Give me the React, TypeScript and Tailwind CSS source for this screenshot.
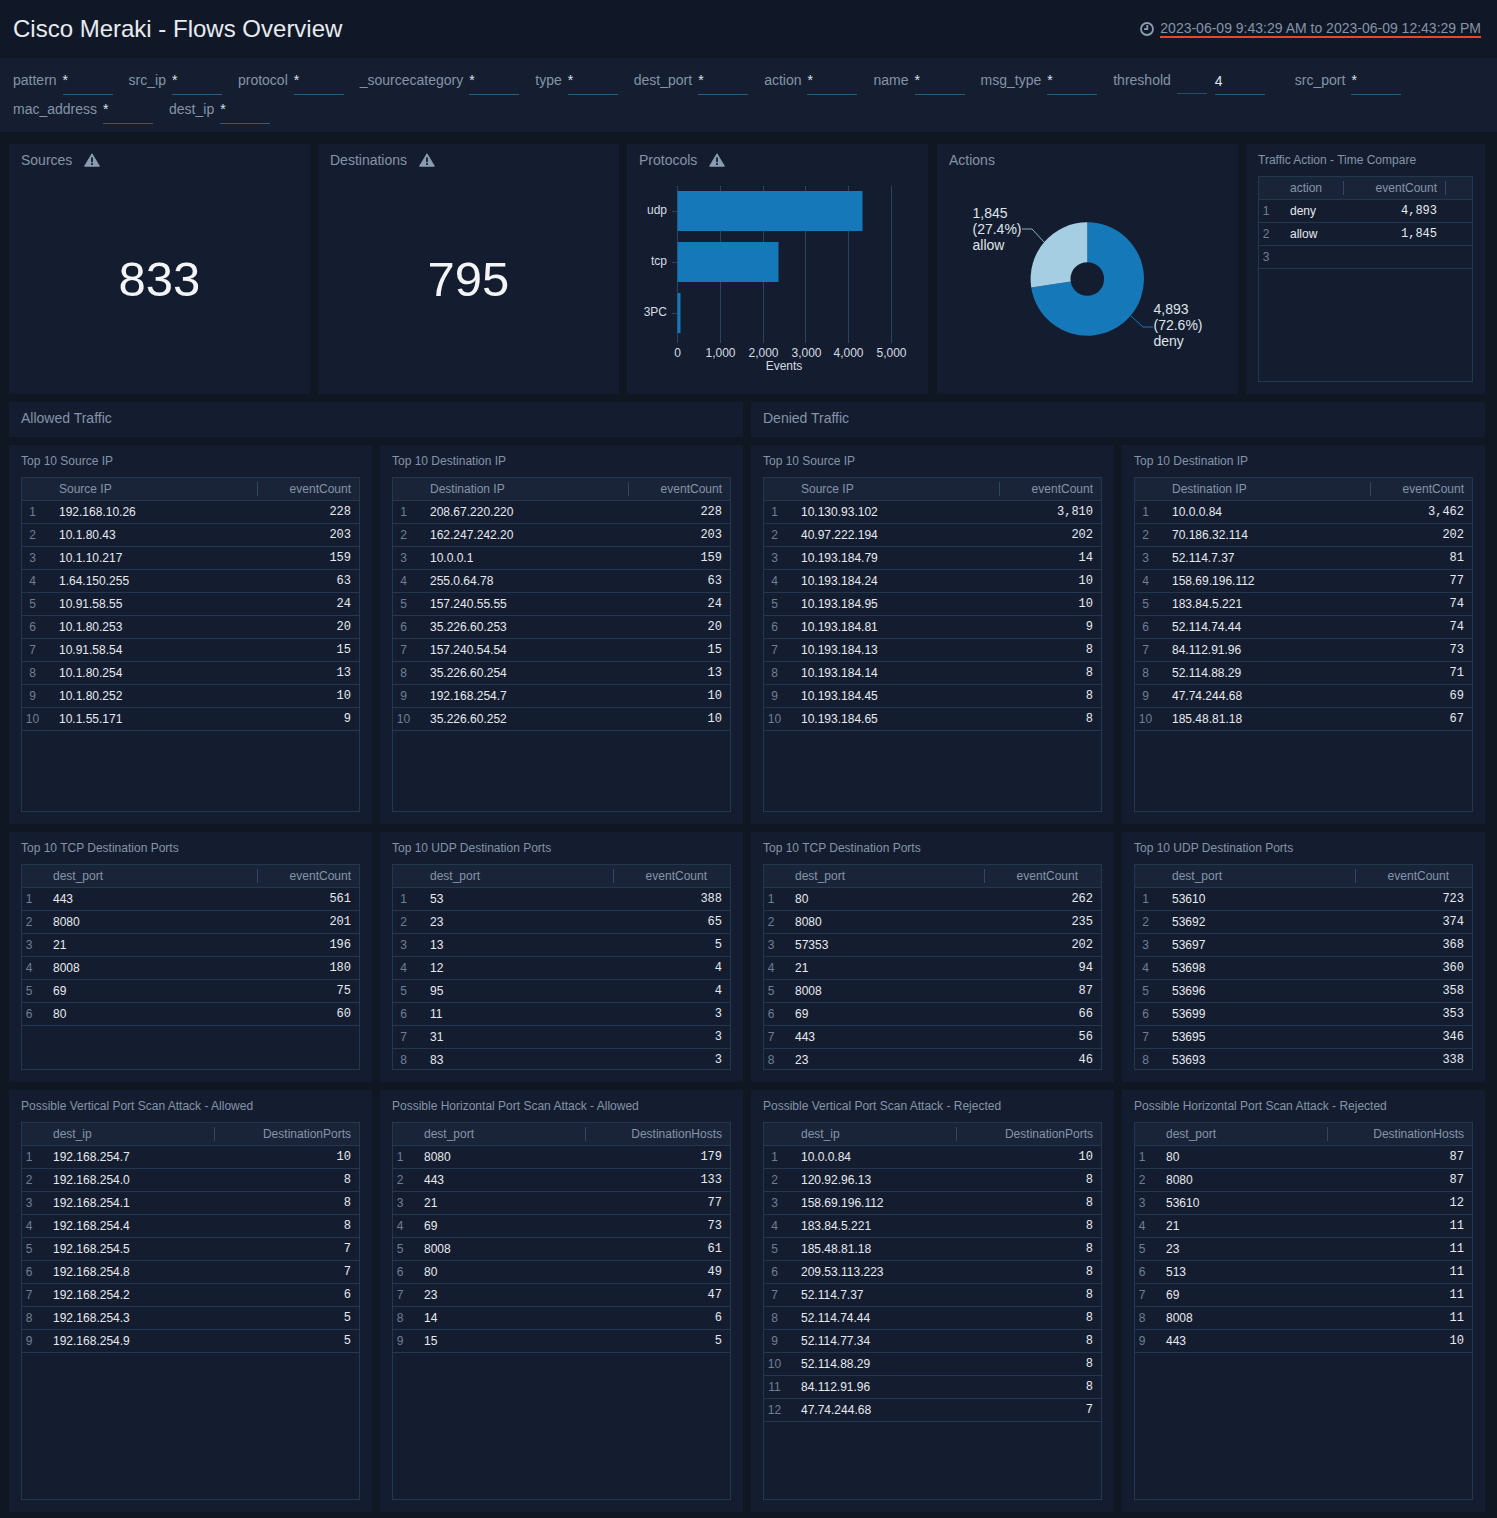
const sans = "font-['Liberation_Sans',Arial,sans-serif]";

type Row = [string, string];
type TProps = {
  title: string;
  head: string;
  right?: string;
  rows: Row[];
  wide?: boolean;
  col?: 'a' | 'b' | 'c';
};

function parse(s: string): Row[] {
  return s.split('|').map((r) => {
    const [a, b] = r.split(' ');
    return [a, b] as Row;
  });
}

function DataTable({ title, head, right = 'eventCount', rows, wide = true, col = 'a' }: TProps) {
  const idx = wide ? 'w-[37px] pr-[16px]' : 'w-[31px] pr-[17px]';
  const rc = col === 'a' ? 'w-[102px] pr-2' : col === 'b' ? 'w-[117px] pr-[23px]' : 'w-[145px] pr-2';
  return (
    <section className="bg-[#141d30] px-3 pb-3 flex flex-col min-h-0 min-w-0">
      <h3 className="h-8 shrink-0 text-xs leading-8 font-normal text-[#8494a8]">{title}</h3>
      <div className="flex-1 min-h-0 overflow-hidden border border-[#25364f] text-xs">
        <div className="flex h-[23px] items-center border-b border-[#25364f] bg-[#1a2439] text-[#8494a8]">
          <span className={`${wide ? 'w-[37px]' : 'w-[31px]'} shrink-0`} />
          <span className="flex-1">{head}</span>
          <span className={`${rc} h-[14px] leading-[14px] border-l border-[#33465f] text-right`}>{right}</span>
        </div>
        {rows.map(([a, b], i) => (
          <div key={i} className="flex h-[23px] items-center border-b border-[#25364f]">
            <span className={`${idx} shrink-0 text-center text-[#6f7f93]`}>{i + 1}</span>
            <span className="flex-1 text-[#e6eaef]">{a}</span>
            <span className="pr-2 text-right font-['Liberation_Mono',monospace] text-[#e6eaef]">{b}</span>
          </div>
        ))}
      </div>
    </section>
  );
}

function Warn() {
  return (
    <svg width="16" height="14" viewBox="0 0 16 14" className="shrink-0">
      <path d="M8 .8 15.4 13.2H.6Z" fill="#8a9cb2" stroke="#8a9cb2" strokeWidth="1" strokeLinejoin="round" />
      <rect x="7.1" y="4.4" width="1.8" height="4.8" fill="#141d30" />
      <rect x="7.1" y="10.2" width="1.8" height="1.8" fill="#141d30" />
    </svg>
  );
}

function Filter({ name, value = '*', extra }: { name: string; value?: string; extra?: boolean }) {
  return (
    <div className={`flex h-[29px] ${extra ? 'mr-[30px]' : 'mr-4'}`}>
      <span className="pt-[5px] leading-[18px] text-[#8494a8]">{name}</span>
      {extra && <span className="ml-[6px] w-[30px] h-[28px] border-b border-[#2c4a6a]" />}
      <span className={`${extra ? 'ml-2 pt-[6px]' : 'ml-[6px] pt-[5px]'} w-[50px] h-[29px] border-b border-[#2c5a85] leading-[18px] text-[#dfe4ea]`}>{value}</span>
    </div>
  );
}

function BigNumber({ title, value }: { title: string; value: string }) {
  return (
    <section className="bg-[#141d30] flex flex-col">
      <div className="flex items-center gap-3 h-[32px] px-3 text-sm text-[#8494a8]">
        <span>{title}</span>
        <Warn />
      </div>
      <div className="flex-1 flex items-center justify-center pb-[13px] text-[49px] text-[#f3f5f7]">{value}</div>
    </section>
  );
}

function BarChart() {
  const grid = [93, 136, 178, 221, 264];
  const labels = ['0', '1,000', '2,000', '3,000', '4,000', '5,000'];
  const xs = [50, 93, 136, 179, 221, 264];
  return (
    <svg width="301" height="220" viewBox="0 0 301 220" className="block text-xs" fontFamily="Liberation Sans, Arial, sans-serif">
      {grid.map((x) => (
        <line key={x} x1={x + 0.5} x2={x + 0.5} y1="12" y2="169" stroke="#2d4263" />
      ))}
      <line x1="50.5" x2="50.5" y1="12" y2="169" stroke="#2d4263" />
      <rect x="50.5" y="17" width="185" height="40" fill="#1578b8" />
      <rect x="50.5" y="68" width="101" height="40" fill="#1578b8" />
      <rect x="50.5" y="119" width="3" height="40" fill="#1578b8" />
      {[37, 88, 139].map((y) => (
        <line key={y} x1="45" x2="50" y1={y + 0.5} y2={y + 0.5} stroke="#2d4263" />
      ))}
      <g fill="#d5dbe3" textAnchor="end" fontSize="12">
        <text x="40" y="40">udp</text>
        <text x="40" y="91">tcp</text>
        <text x="40" y="142">3PC</text>
      </g>
      <g fill="#d5dbe3" textAnchor="middle" fontSize="12">
        {labels.map((l, i) => (
          <text key={l} x={xs[i] + 0.5} y="183">{l}</text>
        ))}
        <text x="157" y="196">Events</text>
      </g>
    </svg>
  );
}

function PieChart() {
  const cx = 150.3;
  const cy = 105;
  const R = 56.7;
  const a = (2 * Math.PI * 1845) / 6738;
  const px = cx - R * Math.sin(a);
  const py = cy - R * Math.cos(a);
  const hole = 16.8;
  return (
    <svg width="301" height="220" viewBox="0 0 301 220" className="block" fontFamily="Liberation Sans, Arial, sans-serif">
      <path d={`M${cx} ${cy}L${cx} ${cy - R}A${R} ${R} 0 1 1 ${px} ${py}Z`} fill="#1578b8" />
      <path d={`M${cx} ${cy}L${cx} ${cy - R}A${R} ${R} 0 0 0 ${px} ${py}Z`} fill="#a6cee3" />
      <circle cx={cx} cy={cy} r={hole} fill="#141d30" />
      <path d="M85 55H95L107 68" fill="none" stroke="#a6cee3" strokeWidth="1" opacity="0.8" />
      <path d="M194 142L206 153H216" fill="none" stroke="#1578b8" strokeWidth="1" />
      <g fill="#dfe4ea" fontSize="14">
        <text x="35.5" y="44">1,845</text>
        <text x="35.5" y="60">(27.4%)</text>
        <text x="35.5" y="76">allow</text>
        <text x="216.5" y="140">4,893</text>
        <text x="216.5" y="156">(72.6%)</text>
        <text x="216.5" y="172">deny</text>
      </g>
    </svg>
  );
}

function ChartPanel({ title, warn, children, offset }: { title: string; warn?: boolean; children: React.ReactNode; offset?: boolean }) {
  return (
    <section className={`bg-[#141d30] overflow-hidden ${offset ? 'ml-px' : ''}`}>
      <div className="flex items-center gap-3 h-[30px] px-3 pt-[2px] text-sm text-[#8494a8]">
        <span>{title}</span>
        {warn && <Warn />}
      </div>
      {children}
    </section>
  );
}

function CompareTable() {
  const rows = [
    ['deny', '4,893'],
    ['allow', '1,845'],
    ['', ''],
  ];
  return (
    <section className="bg-[#141d30] px-3 pb-3 flex flex-col min-w-0">
      <h3 className="h-8 shrink-0 text-xs leading-8 font-normal text-[#8494a8]">Traffic Action - Time Compare</h3>
      <div className="flex-1 overflow-hidden border border-[#25364f] text-xs">
        <div className="flex h-[23px] items-center border-b border-[#25364f] bg-[#1a2439] text-[#8494a8]">
          <span className="w-[31px] shrink-0" />
          <span className="w-[53px] h-[14px] leading-[14px]">action</span>
          <span className="w-[103px] h-[14px] leading-[14px] border-l border-r border-[#33465f] pr-2 text-right">eventCount</span>
        </div>
        {rows.map(([a, b], i) => (
          <div key={i} className="flex h-[23px] items-center border-b border-[#25364f]">
            <span className="w-[31px] pr-[17px] shrink-0 text-center text-[#6f7f93]">{i + 1}</span>
            <span className="w-[53px] text-[#e6eaef]">{a}</span>
            <span className="w-[102px] pr-2 text-right font-['Liberation_Mono',monospace] text-[#e6eaef]">{b}</span>
          </div>
        ))}
      </div>
    </section>
  );
}

export default function App() {
  return (
    <div className={`${sans} min-h-[1518px] bg-[#0f1722] text-sm`}>
      <header className="flex h-[58px] items-center justify-between pl-[13px] pr-4 bg-[#101827]">
        <h1 className="text-2xl font-normal text-[#e8ebf0]">Cisco Meraki - Flows Overview</h1>
        <div className="flex items-center gap-[6px] text-[#8494a8]">
          <svg width="14" height="14" viewBox="0 0 14 14" fill="none" stroke="#8a9cb2" strokeWidth="1.8">
            <circle cx="7" cy="7" r="6" />
            <path d="M7.3 3v4.2H4" />
          </svg>
          <span className="border-b-2 border-[#f0451e] leading-4">2023-06-09 9:43:29 AM to 2023-06-09 12:43:29 PM</span>
        </div>
      </header>

      <div className="flex flex-wrap h-[74px] py-2 pl-[13px] bg-[#141e30]">
        <Filter name="pattern" />
        <Filter name="src_ip" />
        <Filter name="protocol" />
        <Filter name="_sourcecategory" />
        <Filter name="type" />
        <Filter name="dest_port" />
        <Filter name="action" />
        <Filter name="name" />
        <Filter name="msg_type" />
        <Filter name="threshold" value="4" extra />
        <Filter name="src_port" />
        <Filter name="mac_address" />
        <Filter name="dest_ip" />
      </div>

      <main className="flex flex-col gap-2 pt-3 pl-[9px] pr-3">
        <div className="grid h-[250px] grid-cols-[301px_301px_301px_302px_239px] gap-2">
          <BigNumber title="Sources" value="833" />
          <BigNumber title="Destinations" value="795" />
          <ChartPanel title="Protocols" warn>
            <BarChart />
          </ChartPanel>
          <ChartPanel title="Actions" offset>
            <PieChart />
          </ChartPanel>
          <CompareTable />
        </div>

        <div className="grid h-[35px] grid-cols-2 gap-2">
          <div className="bg-[#141d30] px-3 text-sm leading-8 text-[#8494a8]">Allowed Traffic</div>
          <div className="bg-[#141d30] px-3 text-sm leading-8 text-[#8494a8]">Denied Traffic</div>
        </div>

        <div className="grid h-[379px] grid-cols-4 gap-2">
          <DataTable title="Top 10 Source IP" head="Source IP" rows={parse('192.168.10.26 228|10.1.80.43 203|10.1.10.217 159|1.64.150.255 63|10.91.58.55 24|10.1.80.253 20|10.91.58.54 15|10.1.80.254 13|10.1.80.252 10|10.1.55.171 9')} />
          <DataTable title="Top 10 Destination IP" head="Destination IP" rows={parse('208.67.220.220 228|162.247.242.20 203|10.0.0.1 159|255.0.64.78 63|157.240.55.55 24|35.226.60.253 20|157.240.54.54 15|35.226.60.254 13|192.168.254.7 10|35.226.60.252 10')} />
          <DataTable title="Top 10 Source IP" head="Source IP" rows={parse('10.130.93.102 3,810|40.97.222.194 202|10.193.184.79 14|10.193.184.24 10|10.193.184.95 10|10.193.184.81 9|10.193.184.13 8|10.193.184.14 8|10.193.184.45 8|10.193.184.65 8')} />
          <DataTable title="Top 10 Destination IP" head="Destination IP" rows={parse('10.0.0.84 3,462|70.186.32.114 202|52.114.7.37 81|158.69.196.112 77|183.84.5.221 74|52.114.74.44 74|84.112.91.96 73|52.114.88.29 71|47.74.244.68 69|185.48.81.18 67')} />
        </div>

        <div className="grid h-[250px] grid-cols-4 gap-2">
          <DataTable title="Top 10 TCP Destination Ports" head="dest_port" wide={false} rows={parse('443 561|8080 201|21 196|8008 180|69 75|80 60')} />
          <DataTable title="Top 10 UDP Destination Ports" head="dest_port" col="b" rows={parse('53 388|23 65|13 5|12 4|95 4|11 3|31 3|83 3')} />
          <DataTable title="Top 10 TCP Destination Ports" head="dest_port" col="b" wide={false} rows={parse('80 262|8080 235|57353 202|21 94|8008 87|69 66|443 56|23 46')} />
          <DataTable title="Top 10 UDP Destination Ports" head="dest_port" col="b" rows={parse('53610 723|53692 374|53697 368|53698 360|53696 358|53699 353|53695 346|53693 338')} />
        </div>

        <div className="grid h-[422px] grid-cols-4 gap-2">
          <DataTable title="Possible Vertical Port Scan Attack - Allowed" head="dest_ip" right="DestinationPorts" col="c" wide={false} rows={parse('192.168.254.7 10|192.168.254.0 8|192.168.254.1 8|192.168.254.4 8|192.168.254.5 7|192.168.254.8 7|192.168.254.2 6|192.168.254.3 5|192.168.254.9 5')} />
          <DataTable title="Possible Horizontal Port Scan Attack - Allowed" head="dest_port" right="DestinationHosts" col="c" wide={false} rows={parse('8080 179|443 133|21 77|69 73|8008 61|80 49|23 47|14 6|15 5')} />
          <DataTable title="Possible Vertical Port Scan Attack - Rejected" head="dest_ip" right="DestinationPorts" col="c" rows={parse('10.0.0.84 10|120.92.96.13 8|158.69.196.112 8|183.84.5.221 8|185.48.81.18 8|209.53.113.223 8|52.114.7.37 8|52.114.74.44 8|52.114.77.34 8|52.114.88.29 8|84.112.91.96 8|47.74.244.68 7')} />
          <DataTable title="Possible Horizontal Port Scan Attack - Rejected" head="dest_port" right="DestinationHosts" col="c" wide={false} rows={parse('80 87|8080 87|53610 12|21 11|23 11|513 11|69 11|8008 11|443 10')} />
        </div>
      </main>
    </div>
  );
}
